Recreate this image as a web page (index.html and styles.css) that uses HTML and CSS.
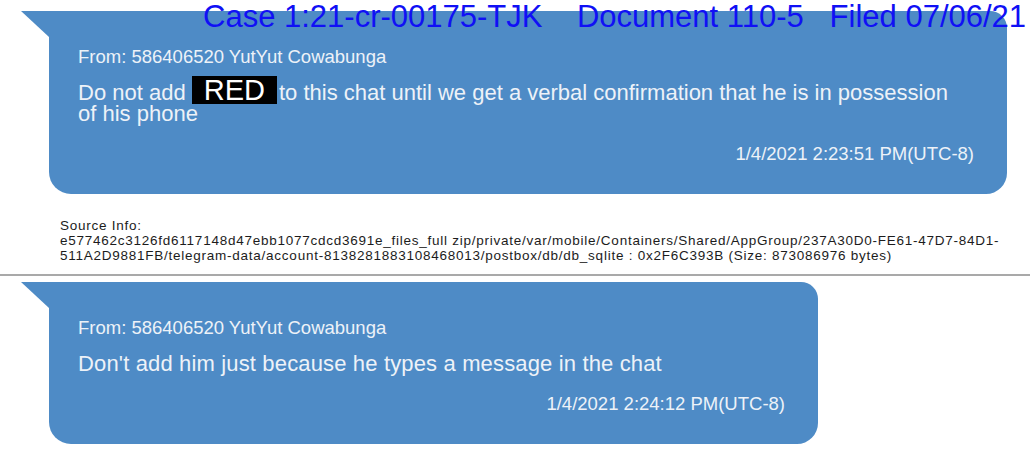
FILE: index.html
```html
<!DOCTYPE html>
<html lang="en">
<head>
    <meta charset="UTF-8">
    <meta name="viewport" content="width=device-width, initial-scale=1.0">
    <title>Chat Report</title>
    <link rel="stylesheet" href="styles.css">
</head>
<body>
    <!-- court filing stamp printed over the page -->
    <div class="stamp">Case 1:21-cr-00175-TJK    Document 110-5   Filed 07/06/21</div>

    <div class="message">
        <div class="bubble bubble-wide">
            <div class="from">From: 586406520 YutYut Cowabunga</div>
            <div class="text">Do not add <span class="redact">RED</span>to this chat until we get a verbal confirmation that he is in possession of his phone</div>
            <div class="time">1/4/2021 2:23:51 PM(UTC-8)</div>
        </div>
        <div class="source">
            Source Info:<br>
            e577462c3126fd6117148d47ebb1077cdcd3691e_files_full zip/private/var/mobile/Containers/Shared/AppGroup/237A30D0-FE61-47D7-84D1-<br>
            511A2D9881FB/telegram-data/account-8138281883108468013/postbox/db/db_sqlite : 0x2F6C393B (Size: 873086976 bytes)
        </div>
    </div>

    <hr class="divider">

    <div class="message">
        <div class="bubble bubble-narrow">
            <div class="from">From: 586406520 YutYut Cowabunga</div>
            <div class="text">Don't add him just because he types a message in the chat</div>
            <div class="time">1/4/2021 2:24:12 PM(UTC-8)</div>
        </div>
    </div>
</body>
</html>
```

FILE: styles.css
```css
:root {
    --bubble-color: #4e8bc6;
    --bubble-text: #edf2f8;
}

body {
    font-family: 'Liberation Sans', Arial, sans-serif;
    margin: 0;
    padding-top: 11px;
    background: #fff;
    overflow: hidden;
}

.stamp {
    position: absolute;
    top: 1px;
    left: 203px;
    font-size: 31px;
    line-height: 31px;
    color: #1010f5;
    white-space: pre;
    z-index: 2;
}

.bubble {
    position: relative;
    margin-left: 49px;
    padding: 35px 40px 29px 29px;
    background: var(--bubble-color);
    color: var(--bubble-text);
    border-radius: 0 17px 21px 22px;
    box-sizing: border-box;
}

/* tail on the top-left corner */
.bubble::before {
    content: "";
    position: absolute;
    top: 0;
    left: -28px;
    border-top: 26px solid var(--bubble-color);
    border-left: 28px solid transparent;
}

.bubble-wide {
    width: 958px;
}

.bubble-narrow {
    width: 769px;
}

.from {
    font-size: 18.5px;
    line-height: 22px;
}

.text {
    font-size: 22px;
    line-height: 21px;
    margin-top: 14px;
}

.bubble-narrow .text {
    letter-spacing: 0.15px;
}

.redact {
    font-size: 29px;
    line-height: 0;
    padding: 0 12px;
    margin-right: 2px;
    color: #fff;
    background: linear-gradient(#000, #000) no-repeat center / 100% 28px;
}

.time {
    font-size: 18.5px;
    line-height: 22px;
    margin-top: 19px;
    margin-right: -7px;
    text-align: right;
}

.source {
    margin: 24px 0 0 60px;
    font-size: 13.5px;
    line-height: 15px;
    letter-spacing: 0.75px;
    color: #1c1c1c;
}

.divider {
    margin: 11px 0 6px;
    border: none;
    border-top: 2px solid #a9a9a9;
}
```
